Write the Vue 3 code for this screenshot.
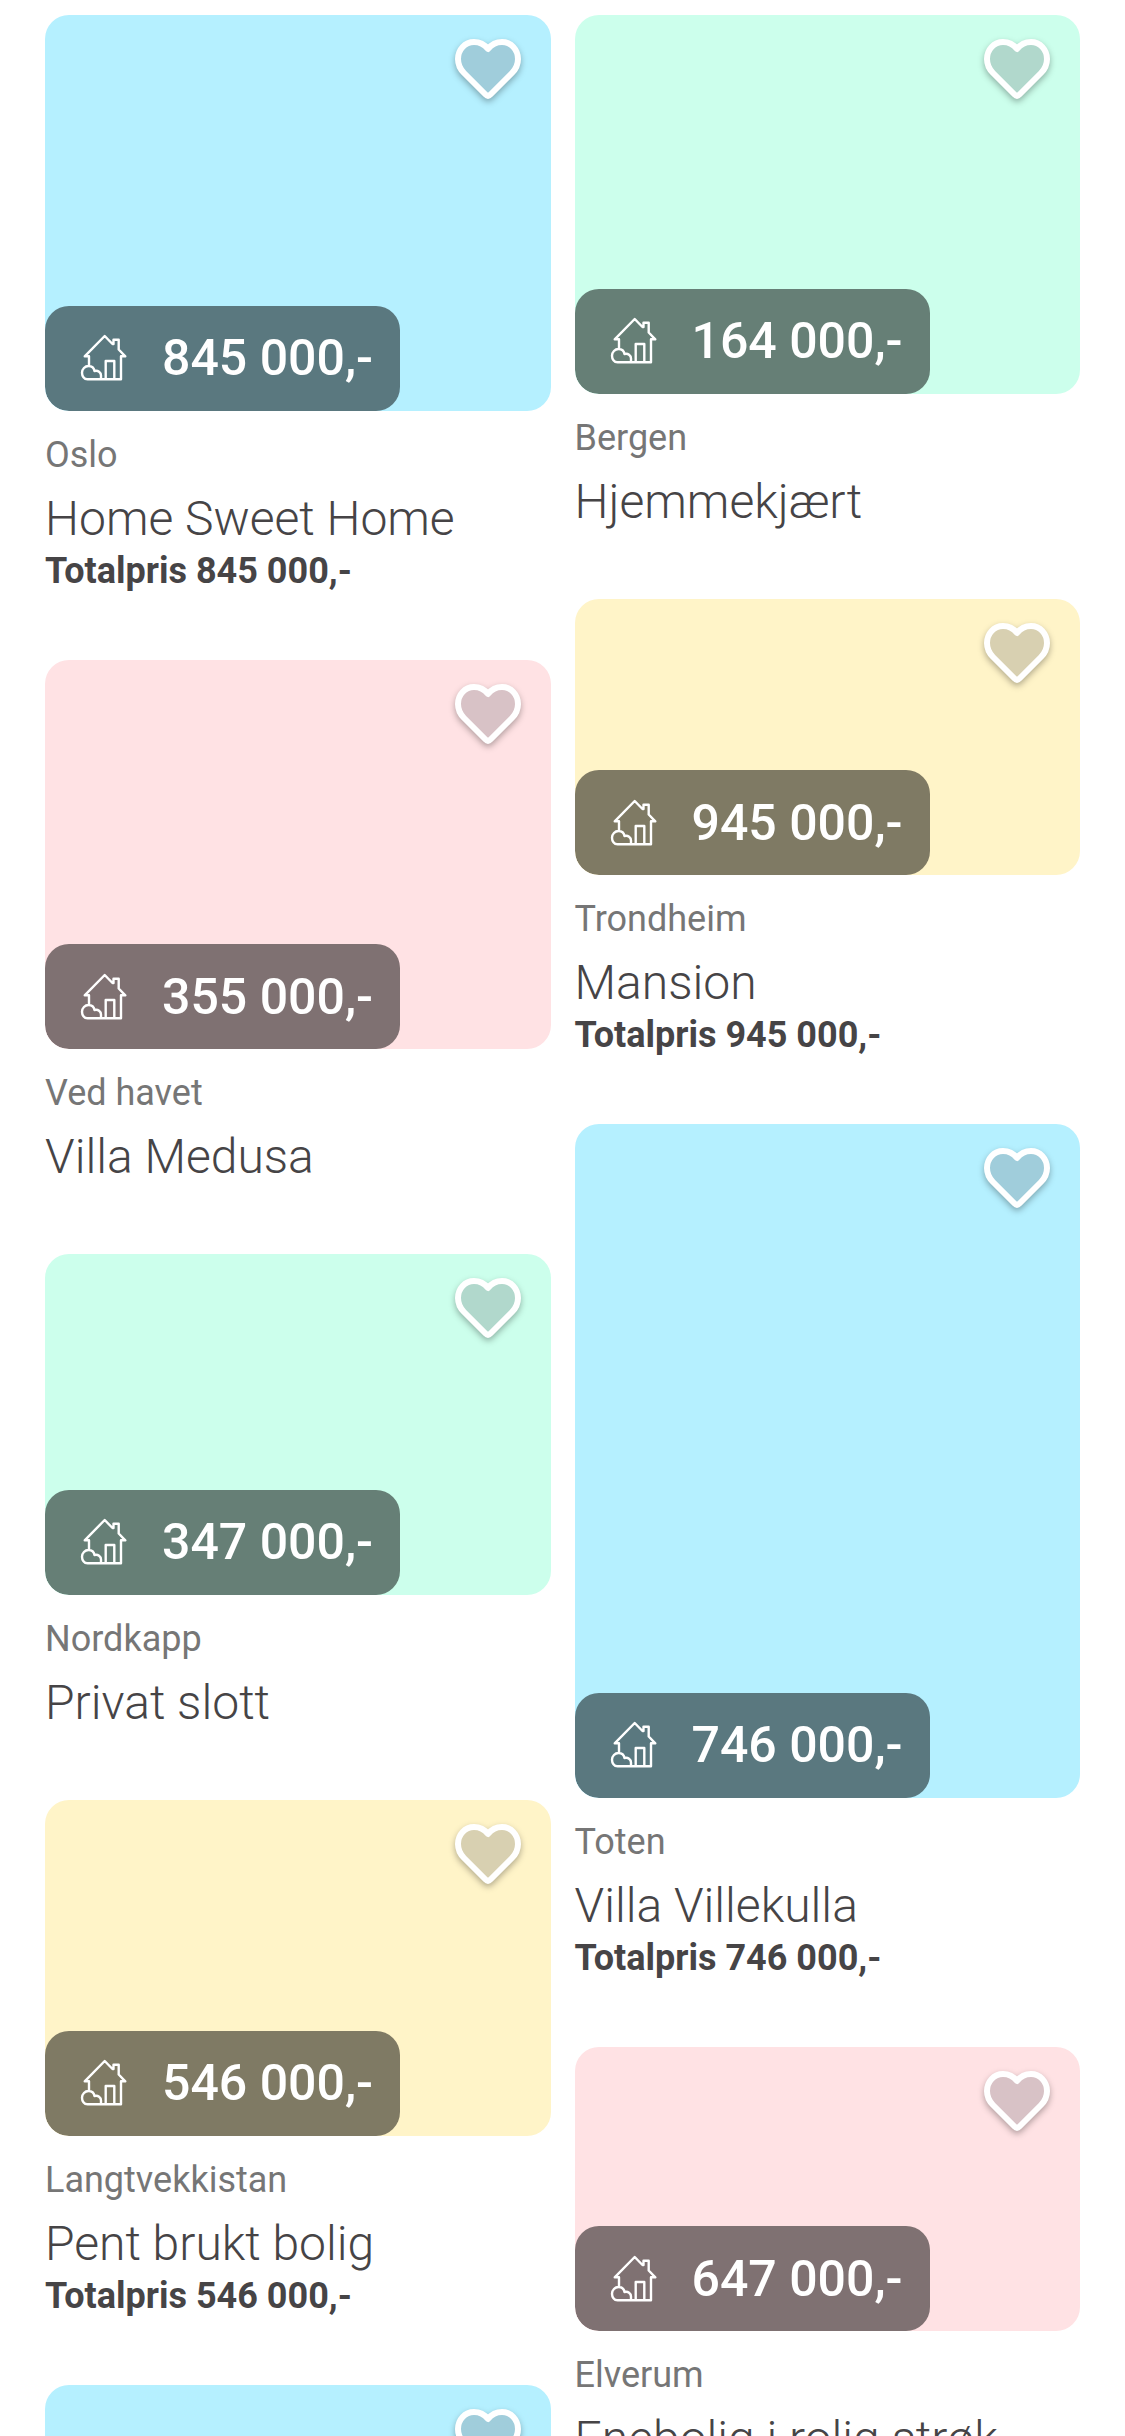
<script setup>
import { reactive } from 'vue'

const columns = reactive([
  [
    { place: 'Oslo', title: 'Home Sweet Home', price: '845 000,-', total: true, tone: 'blue', ratio: '506 / 396', saved: false },
    { place: 'Ved havet', title: 'Villa Medusa', price: '355 000,-', total: false, tone: 'pink', ratio: '506 / 390', saved: false },
    { place: 'Nordkapp', title: 'Privat slott', price: '347 000,-', total: false, tone: 'mint', ratio: '506 / 341', saved: false },
    { place: 'Langtvekkistan', title: 'Pent brukt bolig', price: '546 000,-', total: true, tone: 'yellow', ratio: '506 / 336', saved: false },
    { tone: 'blue', ratio: '506 / 400', saved: false },
  ],
  [
    { place: 'Bergen', title: 'Hjemmekjært', price: '164 000,-', total: false, tone: 'mint', ratio: '506 / 379', saved: false },
    { place: 'Trondheim', title: 'Mansion', price: '945 000,-', total: true, tone: 'yellow', ratio: '506 / 277', saved: false },
    { place: 'Toten', title: 'Villa Villekulla', price: '746 000,-', total: true, tone: 'blue', ratio: '506 / 674', saved: false },
    { place: 'Elverum', title: 'Enebolig i rolig strøk', price: '647 000,-', total: false, tone: 'pink', ratio: '506 / 285', saved: false },
  ],
])
</script>

<template>
  <main class="feed">
    <div v-for="(column, i) in columns" :key="i" class="column">
      <article v-for="(ad, n) in column" :key="n" class="card">
        <div class="photo" :class="ad.tone" :style="{ aspectRatio: ad.ratio }">
          <button
            class="favorite"
            type="button"
            aria-label="Favoritt"
            :aria-pressed="ad.saved"
            @click="ad.saved = !ad.saved"
          >
            <svg viewBox="0 0 72 72" aria-hidden="true">
              <path d="M36 13C32.5 8.500 27.500 6 22 6C13 6 6 13.500 6 23C6 29 8.500 33.500 12 37L33.500 58.500Q36 61 38.500 58.500L60 37C63.500 33.500 66 29 66 23C66 13.500 59 6 50 6C44.500 6 39.500 8.500 36 13Z" />
            </svg>
          </button>
          <div v-if="ad.price" class="badge">
            <svg class="house" viewBox="0 0 48 48" aria-hidden="true">
              <path d="M9 32V22.300H4.700L24.700 2L32.500 10H33.500V5.700H38.700V15.500L45.300 22.300H41V45.300H7.500C4 45.300 2 42 2 38.800C2 35 5 32 8.500 32C11.500 32 14 34 14.500 37C18 36 21 38.500 21 41.500V45.300" />
              <path d="M25.700 45V27H34.300V45" />
            </svg>
            <span class="price">{{ ad.price }}</span>
          </div>
        </div>
        <p v-if="ad.place" class="place">{{ ad.place }}</p>
        <h2 v-if="ad.title" class="title">{{ ad.title }}</h2>
        <p v-if="ad.total" class="total">Totalpris {{ ad.price }}</p>
      </article>
    </div>
  </main>
</template>

<style>
body {
  margin: 0;
  background: #fff;
}
</style>

<style scoped>
.feed {
  display: flex;
  align-items: flex-start;
  gap: 24px;
  box-sizing: border-box;
  height: 100vh;
  padding: 15px 45px 0;
  overflow: hidden;
  font-family: Roboto, "Liberation Sans", sans-serif;
  color: #464446;
}

.column {
  flex: 1;
  min-width: 0;
}

.card {
  padding-bottom: 67px;
}

.photo {
  display: flex;
  flex-direction: column;
  justify-content: space-between;
  align-items: flex-start;
  border-radius: 24px;
  overflow: hidden;
}

.blue {
  --heart: #a0cddb;
  background: #b5f0ff;
}

.pink {
  --heart: #d8c2c6;
  background: #ffe2e4;
}

.mint {
  --heart: #b1d8cc;
  background: #ccffec;
}

.yellow {
  --heart: #d8d0b1;
  background: #fff4c8;
}

.favorite {
  align-self: flex-end;
  width: 72px;
  height: 72px;
  margin: 21px 27px 0 0;
  padding: 0;
  border: 0;
  background: none;
  cursor: pointer;
}

.favorite svg {
  display: block;
  width: 72px;
  height: 72px;
  fill: var(--heart);
  stroke: #fff;
  stroke-width: 6;
  stroke-linejoin: round;
  filter: drop-shadow(0 3px 3px rgba(0, 0, 0, 0.3));
}

.favorite[aria-pressed="true"] svg {
  fill: #fff;
}

.badge {
  display: flex;
  align-items: center;
  gap: 34px;
  height: 105px;
  padding: 0 27px 0 35px;
  border-radius: 24px;
  background: rgba(0, 0, 0, 0.5);
  color: #fff;
}

.house {
  width: 48px;
  height: 48px;
  fill: none;
  stroke: currentColor;
  stroke-width: 2.4;
  stroke-linejoin: round;
}

.price {
  font-size: 50px;
  font-weight: 500;
  line-height: 60px;
  white-space: nowrap;
}

.place,
.title,
.total {
  margin: 0;
}

.place {
  margin-top: 24px;
  font-size: 36px;
  line-height: 40px;
  color: #767676;
}

.title {
  margin-top: 14px;
  font-size: 48px;
  font-weight: 300;
  line-height: 60px;
  white-space: nowrap;
}

.total {
  font-size: 36px;
  font-weight: 700;
  line-height: 44px;
}
</style>
